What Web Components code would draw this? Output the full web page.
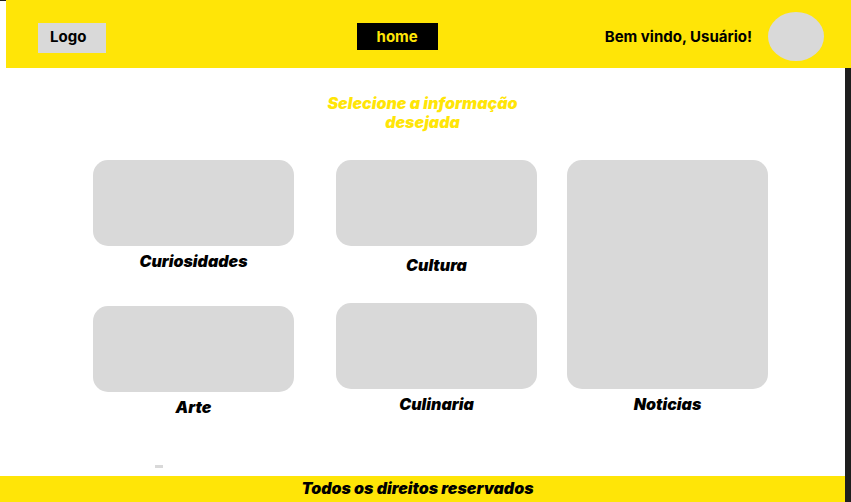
<!DOCTYPE html>
<html lang="pt-BR">
<head>
<meta charset="utf-8">
<meta name="viewport" content="width=device-width, initial-scale=1">
<title>Home</title>
<style>
  :root { --yellow: #ffe507; --gray: #d9d9d9; --dark: #1e1e1e; --heavy: 900; }
  html, body { height: 100%; }
  body { margin: 0; background: var(--dark); color: #000; font: 16px/19px Inter, "Liberation Sans", sans-serif; }
</style>
</head>
<body>
<portal-page>
  <portal-header slot="header">
    <span slot="logo">Logo</span>
    <a slot="nav" href="#home">home</a>
    <span slot="user">Bem vindo, Usuário!</span>
  </portal-header>
  <portal-title>Selecione a informação desejada</portal-title>
  <topic-grid>
    <topic-column class="first">
      <topic-card>Curiosidades</topic-card>
      <topic-card>Arte</topic-card>
    </topic-column>
    <topic-column class="second">
      <topic-card class="spaced">Cultura</topic-card>
      <topic-card>Culinaria</topic-card>
    </topic-column>
    <topic-column class="third">
      <topic-card class="tall">Noticias</topic-card>
    </topic-column>
  </topic-grid>
  <small-mark></small-mark>
  <portal-footer slot="footer">Todos os direitos reservados</portal-footer>
</portal-page>
<script>
  function define(name, markup) {
    const template = document.createElement('template');
    template.innerHTML = markup;
    customElements.define(name, class extends HTMLElement {
      constructor() {
        super();
        this.attachShadow({ mode: 'open' }).append(template.content.cloneNode(true));
      }
    });
  }

  define('portal-page', `
    <style>
      :host { display: flex; flex-direction: column; min-height: 100vh; }
      main { flex: 1; display: flex; flex-direction: column; margin-right: 6px; background: #fff; }
    </style>
    <slot name="header"></slot>
    <main><slot></slot></main>
    <slot name="footer"></slot>`);

  define('portal-header', `
    <style>
      :host { display: block; padding-left: 6px; background: linear-gradient(var(--dark) 1px, #fff 1px); font-size: 15px; font-weight: 700; }
      header { display: grid; grid-template-columns: auto 3fr auto 2fr auto; align-items: start; height: 68px; padding: 0 27px 0 32px; box-sizing: border-box; background: var(--yellow); }
      .logo { width: 68px; height: 30px; margin-top: 23px; padding: 4px 12px; box-sizing: border-box; background: var(--gray); }
      nav { grid-column: 3; margin-top: 23px; }
      ::slotted(a) { display: block; width: 81px; line-height: 27px; text-align: center; color: var(--yellow); background: #000; text-decoration: none; }
      .user { grid-column: 5; display: flex; align-items: center; gap: 16px; margin-top: 12px; white-space: nowrap; }
      .avatar { width: 56px; height: 49px; border-radius: 50%; background: var(--gray); }
    </style>
    <header>
      <div class="logo"><slot name="logo"></slot></div>
      <nav><slot name="nav"></slot></nav>
      <div class="user"><slot name="user"></slot><div class="avatar"></div></div>
    </header>`);

  define('portal-title', `
    <style>
      :host { display: block; padding-top: 26px; }
      h1 { max-width: 200px; margin: 0 auto; font: inherit; font-weight: var(--heavy); font-style: italic; text-align: center; color: var(--yellow); }
    </style>
    <h1><slot></slot></h1>`);

  define('topic-grid', `
    <style>
      :host { display: flex; gap: 30px; padding: 28px 77px 0 93px; }
      ::slotted(*) { flex: 1 1 0; min-width: 0; }
      ::slotted(.first) { margin-right: 12px; }
    </style>
    <slot></slot>`);

  define('topic-column', `
    <style>
      :host { display: flex; flex-direction: column; gap: 35px; }
      :host(.second) { gap: 28px; }
      :host(.third) { padding-bottom: 3px; }
      ::slotted(.tall) { flex: 1; }
    </style>
    <slot></slot>`);

  define('topic-card', `
    <style>
      :host { display: flex; }
      a { flex: 1; display: flex; flex-direction: column; gap: 6px; color: inherit; text-decoration: none; text-align: center; font-weight: var(--heavy); font-style: italic; }
      :host(.spaced) a { gap: 10px; }
      .box { flex: 1 0 auto; min-height: 86px; border-radius: 15px; background: var(--gray); }
    </style>
    <a href="#topic"><span class="box"></span><span><slot></slot></span></a>`);

  define('small-mark', `
    <style>
      :host { display: block; width: 8px; height: 3px; margin: auto 0 8px 155px; background: var(--gray); }
    </style>`);

  define('portal-footer', `
    <style>
      :host { display: block; margin-right: 6px; background: var(--yellow); }
      footer { padding: 3px 10px 4px 0; text-align: center; font-weight: var(--heavy); font-style: italic; }
    </style>
    <footer><slot></slot></footer>`);
</script>
</body>
</html>
